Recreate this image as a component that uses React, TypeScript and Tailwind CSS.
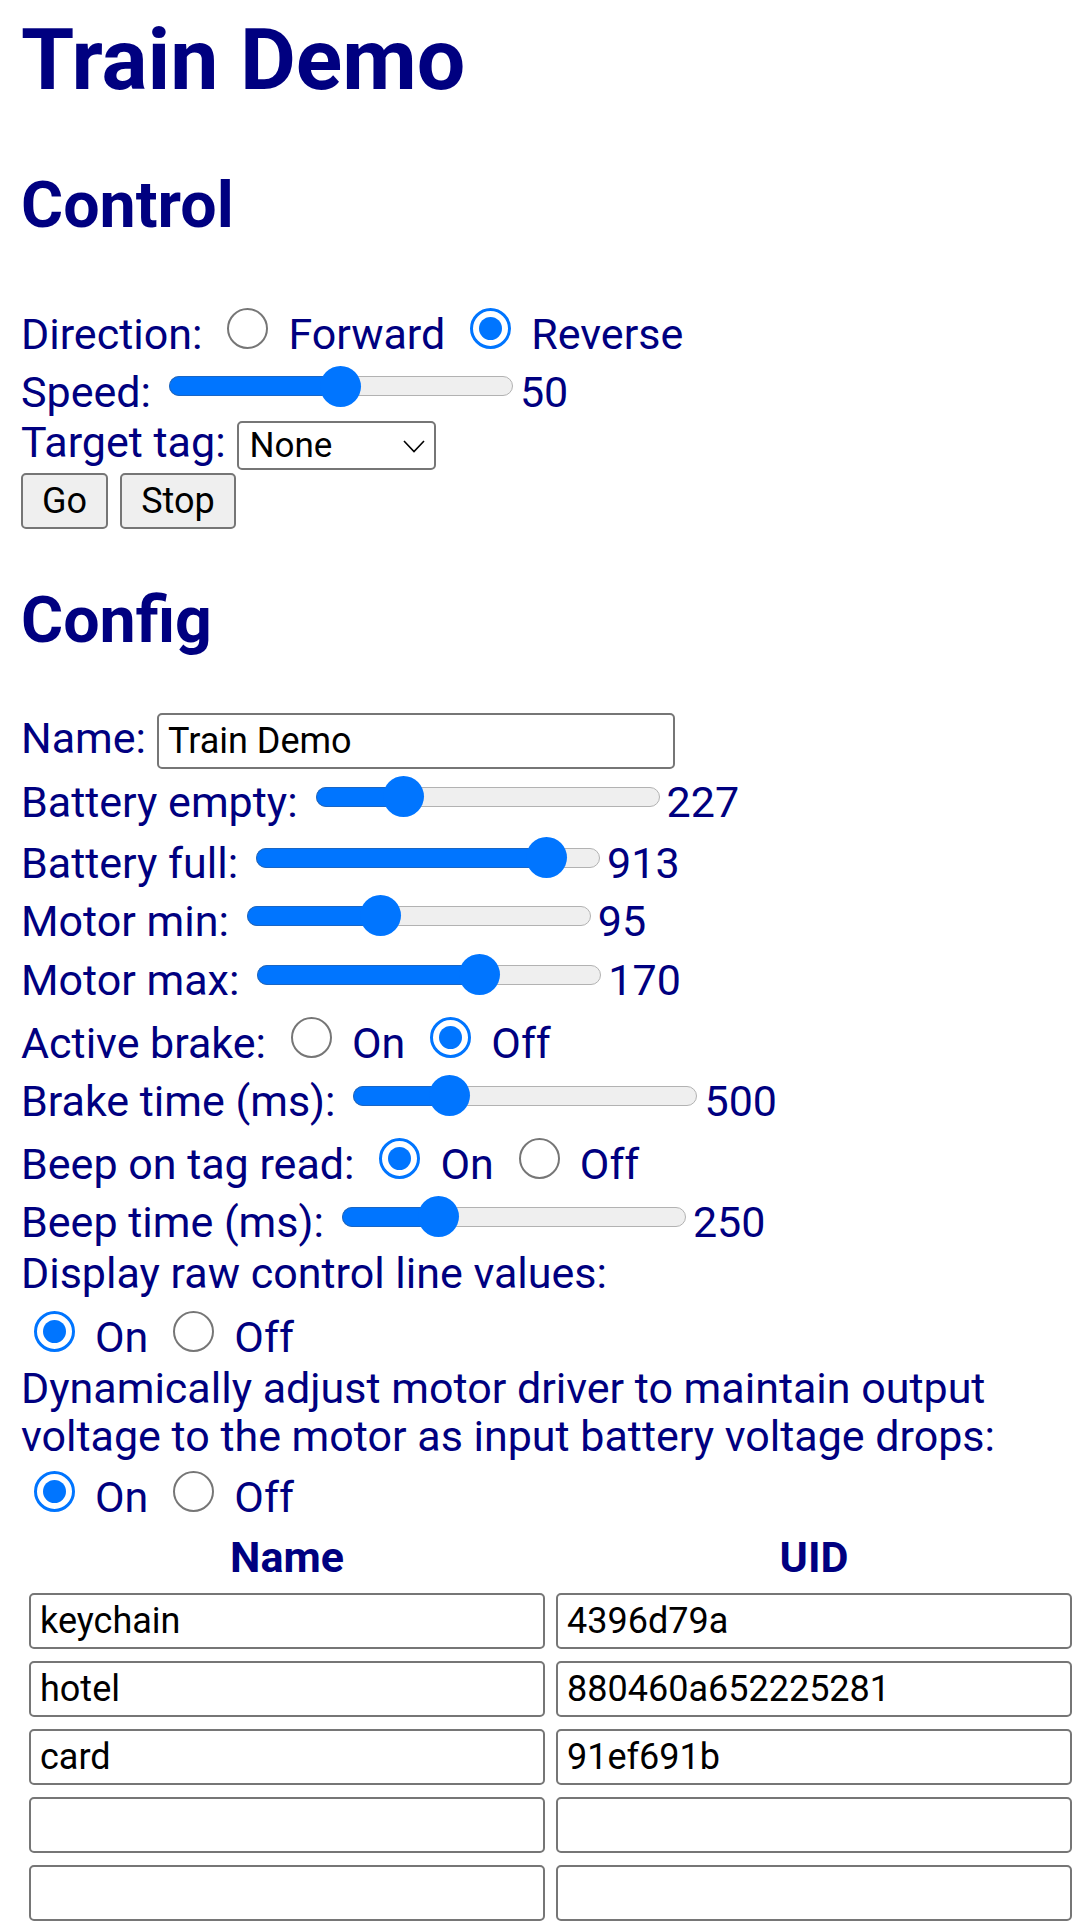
import React from "react";

function Radio({ checked }: { checked?: boolean }) {
  if (checked) {
    return (
      <div className="relative w-[41px] h-[41px] shrink-0 rounded-full border-[3px] border-[#0075ff] bg-white">
        <div className="absolute left-[6px] top-[6px] w-[23px] h-[23px] rounded-full bg-[#0075ff]" />
      </div>
    );
  }
  return <div className="w-[41px] h-[41px] shrink-0 rounded-full border-2 border-[#767676] bg-white" />;
}

function Slider({ value, min, max }: { value: number; min: number; max: number }) {
  const width = 344;
  const r = 20.5;
  const frac = (value - min) / (max - min);
  const cx = r + frac * (width - 2 * r);
  return (
    <div className="relative w-[344px] h-[41px] shrink-0">
      <div className="absolute left-0 right-0 top-[10.5px] h-[20px] rounded-full bg-[#efefef] border-[1.5px] border-[#b2b2b2]" />
      <div
        className="absolute left-0 top-[10.5px] h-[20px] rounded-l-full bg-[#0075ff] border-[1.5px] border-r-0 border-[#1a66c4]"
        style={{ width: cx }}
      />
      <div className="absolute top-0 h-[41px] w-[41px] rounded-full bg-[#0075ff]" style={{ left: cx - r }} />
    </div>
  );
}

function SliderRow({ label, value, min, max, h }: { label: string; value: number; min: number; max: number; h: string }) {
  return (
    <div className={`flex items-baseline ${h}`}>
      <span>{label}</span>
      <div className="ml-[18px]">
        <Slider value={value} min={min} max={max} />
      </div>
      <span className="ml-[7px]">{value}</span>
    </div>
  );
}

function RadioPair({ a, b, checkedFirst, label, h, first }: { a: string; b: string; checkedFirst: boolean; label?: string; h: string; first?: boolean }) {
  return (
    <div className={`flex items-baseline ${h}`}>
      {label && <span>{label}</span>}
      <div className={first ? "ml-[13px]" : "ml-[25px]"}>
        <Radio checked={checkedFirst} />
      </div>
      <span className="ml-[20px]">{a}</span>
      <div className="ml-[25px]">
        <Radio checked={!checkedFirst} />
      </div>
      <span className="ml-[20px]">{b}</span>
    </div>
  );
}

function TextBox({ value, w }: { value: string; w: string }) {
  return (
    <div className={`${w} h-[56px] border-2 border-[#767676] rounded-[5px] bg-white px-[9px] text-[36px] leading-[52px] text-black whitespace-nowrap overflow-hidden`}>
      {value}
    </div>
  );
}

export default function App() {
  const tags: [string, string][] = [
    ["keychain", "4396d79a"],
    ["hotel", "880460a652225281"],
    ["card", "91ef691b"],
    ["", ""],
    ["", ""],
  ];
  return (
    <div className="w-[1080px] min-h-[1931px] bg-white font-[Roboto,sans-serif] text-[#000080] text-[43px] leading-[48px] pl-[21px] pt-[17px] overflow-hidden">
      <h1 className="text-[86px] leading-[86px] font-bold">Train Demo</h1>
      <h2 className="mt-[70px] text-[64.5px] leading-[64.5px] font-bold">Control</h2>

      <div className="mt-[70px] flex flex-col">
        <RadioPair label="Direction:" a="Forward" b="Reverse" checkedFirst={false} h="h-[58px]" />
        <SliderRow label="Speed:" value={50} min={0} max={100} h="h-[52px]" />
        <div className="flex items-baseline h-[55px]">
          <span>Target tag:</span>
          <div className="ml-[11px] relative w-[199px] h-[49px] border-2 border-[#767676] rounded-[5px] bg-white pl-[11px] text-[35px] leading-[45px] text-black">
            None
            <svg className="absolute right-[9px] top-[17px]" width="22" height="13" viewBox="0 0 22 13">
              <polyline points="1,1 11,11.5 21,1" fill="none" stroke="#000" strokeWidth="1.6" />
            </svg>
          </div>
        </div>
        <div className="flex items-start gap-[12px] h-[56px] text-black text-[36px]">
          <div className="h-[56px] w-[87px] border-2 border-[#767676] rounded-[5px] bg-[#efefef] flex items-center justify-center">Go</div>
          <div className="h-[56px] w-[116px] border-2 border-[#767676] rounded-[5px] bg-[#efefef] flex items-center justify-center">Stop</div>
        </div>
      </div>

      <h2 className="mt-[59px] text-[64.5px] leading-[64.5px] font-bold">Config</h2>

      <div className="mt-[61px] flex flex-col">
        <div className="flex items-baseline h-[63px]">
          <span>Name:</span>
          <div className="ml-[11px]">
            <TextBox value="Train Demo" w="w-[518px]" />
          </div>
        </div>
        <SliderRow label="Battery empty:" value={227} min={0} max={1023} h="h-[61px]" />
        <SliderRow label="Battery full:" value={913} min={0} max={1023} h="h-[58px]" />
        <SliderRow label="Motor min:" value={95} min={0} max={255} h="h-[59px]" />
        <SliderRow label="Motor max:" value={170} min={0} max={255} h="h-[63px]" />
        <RadioPair label="Active brake:" a="On" b="Off" checkedFirst={false} h="h-[58px]" />
        <SliderRow label="Brake time (ms):" value={500} min={0} max={2000} h="h-[63px]" />
        <RadioPair label="Beep on tag read:" a="On" b="Off" checkedFirst={true} h="h-[58px]" />
        <SliderRow label="Beep time (ms):" value={250} min={0} max={1000} h="h-[53px]" />
        <div className="h-[62px]">Display raw control line values:</div>
        <RadioPair a="On" b="Off" checkedFirst={true} h="h-[53px]" first />
        <div className="h-[48px] whitespace-nowrap">Dynamically adjust motor driver to maintain output</div>
        <div className="h-[59px] whitespace-nowrap">voltage to the motor as input battery voltage drops:</div>
        <RadioPair a="On" b="Off" checkedFirst={true} h="h-[62px]" first />
      </div>

      <div className="ml-[8px] w-[1043px]">
        <div className="grid grid-cols-[516px_516px] gap-x-[11px] font-bold h-[60px]">
          <div className="text-center">Name</div>
          <div className="text-center">UID</div>
        </div>
        <div className="grid grid-cols-[516px_516px] gap-x-[11px] gap-y-[12px]">
          {tags.map(([n, u], i) => (
            <React.Fragment key={i}>
              <TextBox value={n} w="w-[516px]" />
              <TextBox value={u} w="w-[516px]" />
            </React.Fragment>
          ))}
        </div>
      </div>
    </div>
  );
}
